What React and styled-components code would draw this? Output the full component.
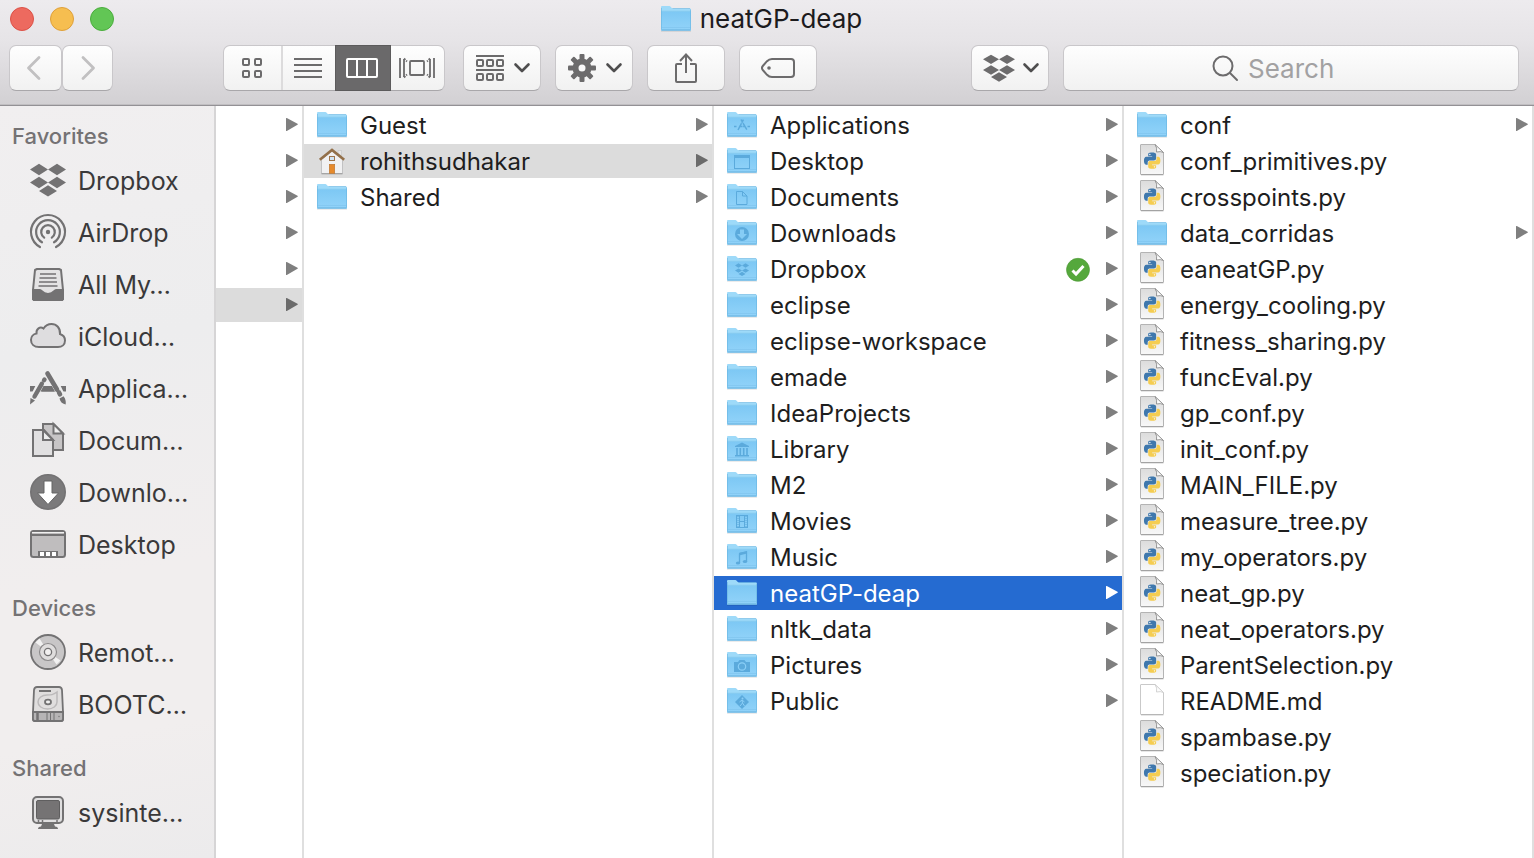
import React from "react";
import styled, { createGlobalStyle, css } from "styled-components";

const GlobalStyle = createGlobalStyle`
  * { box-sizing: border-box; }
  html, body, #root { height: 100%; margin: 0; }
  body { background: #fff; overflow: hidden; }
  body, button, input { font-family: Inter, "Liberation Sans", sans-serif; }
  button { border: 0; padding: 0; background: none; color: inherit; text-align: left; }
  svg { display: block; flex: none; overflow: visible; }
  ul { list-style: none; margin: 0; padding: 0; }
`;

const Window = styled.div`
  display: flex;
  flex-direction: column;
  height: 100vh;
`;

const Header = styled.header`
  flex: none;
  background: linear-gradient(#edebee, #e6e4e7 40%, #d2d0d3);
  border-bottom: 1px solid #939195;
  box-shadow: inset 0 -1px 0 #c0bec1;
  padding-bottom: 14px;
`;

const TitleBar = styled.div`
  display: grid;
  grid-template-columns: 1fr auto 1fr;
  align-items: center;
  height: 38px;
  margin-bottom: 7px;
  padding: 0 22px 0 10px;
`;

const Lights = styled.div`
  display: flex;
  gap: 16px;
`;

const Light = styled.button`
  width: 24px;
  height: 24px;
  border-radius: 50%;
  background: ${(p) => p.$fill};
  border: 1px solid ${(p) => p.$edge};
`;

const Title = styled.h1`
  display: flex;
  align-items: center;
  gap: 8px;
  margin: 0;
  font-size: 26px;
  line-height: 32px;
  font-weight: 400;
  color: #1c1b1d;
`;

const Toolbar = styled.div`
  display: flex;
  padding: 0 15px 0 9px;
`;

const raised = css`
  height: 46px;
  background: linear-gradient(#fefefe, #f1f1f1);
  border: 1px solid #c9c7ca;
  border-bottom-color: #a9a7aa;
  border-radius: 7px;
`;

const ToolButton = styled.button`
  ${raised}
  display: flex;
  align-items: center;
  justify-content: center;
  gap: 10px;
  flex: none;
  width: ${(p) => p.$width || 78}px;
  color: ${(p) => (p.disabled ? "#c1c0c1" : "#6c6b6c")};
`;

const MenuButton = styled(ToolButton)`
  padding-left: 2px;
`;

const DropboxButton = styled(ToolButton)`
  gap: 8px;
  padding-left: 2px;
`;

const BackButton = styled(ToolButton)`
  padding-right: 4px;
`;

const Group = styled.div`
  display: flex;
  flex: none;
  gap: ${(p) => p.$gap}px;
  margin-right: ${(p) => p.$after}px;
`;

const Segments = styled(Group)`
  ${raised}
`;

const Segment = styled.button`
  display: flex;
  align-items: center;
  justify-content: center;
  width: ${(p) => p.$width}px;
  padding-right: 2px;
  color: #6c6b6c;
  border-left: ${(p) => (p.$divided ? "2px solid #dcdbdc" : "0")};
  ${(p) =>
    p.$active &&
    css`
      color: #fff;
      background: #6a696a;
      border: 1px solid #5c5b5c;
      margin: -1px 0;
    `}
`;

const SearchField = styled.label`
  ${raised}
  display: flex;
  flex: 1;
  align-items: center;
  justify-content: center;
  gap: 10px;
  padding-right: 30px;
`;

const SearchInput = styled.input`
  width: 92px;
  padding: 1px 0 0;
  border: 0;
  outline: 0;
  background: none;
  font-size: 26px;
  color: #333;
  &::placeholder { color: #a2a1a2; opacity: 1; }
`;

const Body = styled.main`
  display: flex;
  flex: 1;
  min-height: 0;
`;

const Sidebar = styled.nav`
  flex: none;
  width: 216px;
  padding-top: 13px;
  overflow: hidden;
  border-right: 2px solid #d6d5d6;
  background: linear-gradient(170deg, #f1eff0, #ededee 32%, #f1eeee 62%, #f1eeee 82%, #ecebec);
`;

const Section = styled.section`
  margin-bottom: 20px;
`;

const SectionTitle = styled.h2`
  margin: 0;
  padding-left: 12px;
  font-size: 22px;
  line-height: 35px;
  height: 36px;
  font-weight: 500;
  color: #747274;
`;

const Place = styled.button`
  display: flex;
  align-items: center;
  gap: 12px;
  width: 100%;
  height: 52px;
  padding-left: 30px;
  font-size: 25px;
  color: #3a393a;
  white-space: nowrap;
`;

const Column = styled.ul`
  display: flex;
  flex-direction: column;
  gap: 2px;
  flex: ${(p) => (p.$narrow ? "0 0 88px" : "1 1 0")};
  min-width: 0;
  padding-top: 2px;
  overflow: hidden;
  border-right: 2px solid #dfdfdf;
`;

const Entry = styled.button`
  display: flex;
  align-items: center;
  width: 100%;
  height: 34px;
  padding: 0 4px 0 12px;
  gap: 12px;
  font-size: 24px;
  color: ${(p) => (p.$tone === "focus" ? "#fff" : "#1e1e1e")};
  background: ${(p) => ({ focus: "#256bd1", path: "#dcdcdc" })[p.$tone] || "none"};
`;

const EntryName = styled.span`
  flex: 1;
  min-width: 0;
  padding-top: 1px;
  white-space: nowrap;
`;

const Status = styled.span`
  margin-right: 4px;
`;

/* ---------- toolbar drawings ---------- */

const Chevron = () => (
  <svg width="16" height="10" viewBox="0 0 16 10" fill="none" stroke="#4f4e4f" strokeWidth="2.6" strokeLinecap="round" strokeLinejoin="round">
    <path d="M1.5 1.5 8 8l6.500-6.500" />
  </svg>
);

const Arrow = ({ back }) => (
  <svg width="14" height="24" viewBox="0 0 14 24" fill="none" stroke="currentColor" strokeWidth="2.800" strokeLinecap="round" strokeLinejoin="round">
    <path d={back ? "M12 1.500 1.500 12 12 22.500" : "M2 1.500 12.500 12 2 22.500"} />
  </svg>
);

const GridIcon = () => (
  <svg width="20" height="20" viewBox="0 0 20 20" fill="none" stroke="currentColor" strokeWidth="2">
    {[[1, 1], [13, 1], [1, 13], [13, 13]].map(([x, y]) => (
      <rect key={`${x}-${y}`} x={x} y={y} width="6" height="6" rx="1" />
    ))}
  </svg>
);

const ListIcon = () => (
  <svg width="28" height="20" viewBox="0 0 28 20" stroke="currentColor" strokeWidth="2">
    <path d="M0 1h28M0 7h28M0 13h28M0 19h28" />
  </svg>
);

const ColumnsIcon = () => (
  <svg width="32" height="20" viewBox="0 0 32 20" fill="none" stroke="currentColor" strokeWidth="2">
    <rect x="1" y="1" width="30" height="18" rx="1" />
    <path d="M11 1v18M21 1v18" />
  </svg>
);

const CoverIcon = () => (
  <svg width="36" height="20" viewBox="0 0 36 20" fill="none" stroke="currentColor" strokeWidth="1.800">
    <rect x="11" y="3" width="14" height="14" rx="1" />
    <path d="M1 0v20M35 0v20M5 1v18M31 1v18" />
    <path d="M5 .5 8 3.500M5 19.500 8 16.500M31 .5 28 3.500M31 19.500 28 16.500" strokeDasharray="2 1" />
  </svg>
);

const ArrangeIcon = () => (
  <svg width="28" height="26" viewBox="0 0 28 26" fill="none" stroke="currentColor" strokeWidth="2">
    <path d="M0 1h28M0 15h28" />
    {[5, 19].map((y) => [1, 11, 21].map((x) => <rect key={`${x}-${y}`} x={x} y={y} width="6" height="6" rx="1" />))}
  </svg>
);

const GearIcon = () => (
  <svg width="28" height="28" viewBox="0 0 28 28" fill="currentColor">
    {[0, 45, 90, 135].map((a) => (
      <rect key={a} x="11.500" y="0" width="5" height="28" rx="1" transform={`rotate(${a} 14 14)`} />
    ))}
    <circle cx="14" cy="14" r="9.500" />
    <circle cx="14" cy="14" r="3.500" fill="#f8f8f8" />
  </svg>
);

const ShareIcon = () => (
  <svg width="22" height="30" viewBox="0 0 22 30" fill="none" stroke="currentColor" strokeWidth="2">
    <path d="M7 11H2a1 1 0 0 0-1 1v16a1 1 0 0 0 1 1h18a1 1 0 0 0 1-1V12a1 1 0 0 0-1-1h-5M11 20V2M5 8l6-6.500L17 8" />
  </svg>
);

const TagIcon = () => (
  <svg width="34" height="20" viewBox="0 0 34 20" fill="none" stroke="currentColor" strokeWidth="2">
    <path d="M11 1h19a3 3 0 0 1 3 3v12a3 3 0 0 1-3 3H11c-2 0-3.500-.6-5-2.200L1.800 12c-1-1.200-1-2.800 0-4L6 3.200C7.500 1.600 9 1 11 1Z" />
    <circle cx="8" cy="10" r="1.800" fill="currentColor" stroke="none" />
  </svg>
);

const SearchIcon = () => (
  <svg width="26" height="26" viewBox="0 0 26 26" fill="none" stroke="#6c6b6c" strokeWidth="2" strokeLinecap="round">
    <circle cx="11" cy="11" r="9.500" />
    <path d="m18 18 7 7" />
  </svg>
);

const dropboxPath =
  "M9 .8 18 6.500 9 12.200 0 6.500ZM27 .8l9 5.700-9 5.700-9-5.700ZM9 13.800l9 5.700-9 5.700-9-5.700ZM27 13.800l9 5.700-9 5.700-9-5.700ZM18 22.200l9 5.700-9 5.700-9-5.700Z";

const DropboxMark = () => (
  <svg width="32" height="28" viewBox="0 0 36 34" preserveAspectRatio="none" fill="currentColor">
    <path d={dropboxPath} />
  </svg>
);

/* ---------- sidebar drawings, on a 36px square ---------- */

const G = "#737273";
const placeArt = {
  dropbox: <path d={dropboxPath} fill={G} />,
  airdrop: (
    <g fill="none" stroke={G} strokeWidth="2.200" strokeLinecap="round">
      <path d="M10 32a17 17 0 1 1 16 0" />
      <path d="M12 27.300a11.900 11.900 0 1 1 12 0" />
      <path d="M14.200 22.600a6.800 6.800 0 1 1 7.600 0" />
      <circle cx="18" cy="17" r="2.200" fill={G} stroke="none" />
    </g>
  ),
  files: (
    <g stroke={G} strokeWidth="2">
      <path d="M7 2h22l2 1 2 20v9l-1 1H4l-1-1v-9L5 3Z" fill="#e4e3e4" strokeLinejoin="round" />
      <path d="M3 23h7c2 0 2 4 8 4s6-4 8-4h7v9l-1 1H4l-1-1Z" fill={G} />
      <path d="M10 7h16M9.500 11h17M9 15h18M8.500 19h19" strokeWidth="1.700" />
    </g>
  ),
  cloud: (
    <path d="M9 28C4 28 1 25 1 21c0-3 2-6 5.500-6.500C6 10 10 7 13.500 9.500 15.500 6.500 18 5 21.500 5c5 0 9 4 8.500 10 3 1 5 3 5 6.500 0 4-3 6.500-7 6.500Z" fill="#dedddf" stroke={G} strokeWidth="2" />
  ),
  apps: (
    <g>
      <path d="M0 15h36v5.500H0Z" fill={G} />
      <path d="M16 2 3 29M20 2l13 27" stroke="#eee" strokeWidth="8" />
      <path d="M13.500 15h8l3.500 5.500H10.500Z" fill={G} />
      <g stroke={G} strokeLinecap="round" fill="none">
        <path d="m17.500 2.500 9.500 16M29 21.500l1 1.800" strokeWidth="4.600" />
        <path d="M14.500 8.500 14 9.200M11.800 12.800 4.500 25.500" strokeWidth="4.400" />
      </g>
      <path d="M.5 27 5 29.500 0 33.500Z" fill={G} />
      <path d="m29.500 27.500 4-2.200c2 2.200 2.500 5 2.200 8.200-3-.5-5.500-2.500-6.200-6Z" fill={G} />
    </g>
  ),
  docs: (
    <g stroke={G} strokeWidth="2">
      <path d="M13 1h10.500L33 10.500V27H13Z" fill="#c7c5c6" />
      <path d="M23.500 1v9.500H33Z" fill="#eee" />
      <path d="M3 7h11l9 10v16H3Z" fill="#e1e0e1" />
      <path d="M13 7v10h10Z" fill="#eee" />
    </g>
  ),
  down: (
    <g>
      <circle cx="18" cy="17" r="17.200" fill="#7b7a7b" stroke={G} strokeWidth="1.600" />
      <path d="M14 6h8v12h6.500L18 29.500 7.500 18H14Z" fill="#fff" stroke="#656465" />
    </g>
  ),
  desktop: (
    <g>
      <rect x="1" y="4" width="34" height="26" rx="2.500" fill="#bfbdbe" stroke={G} strokeWidth="2" />
      <path d="M2 5.500h32" stroke="#f0f0f0" />
      <path d="M1 8h34" stroke={G} strokeWidth="2" />
      <path d="M8 24h20v5H8Z" fill={G} />
      <path d="M10 25h4v4h-4ZM16 25h4v4h-4ZM22 25h4v4h-4Z" fill="#fff" />
    </g>
  ),
  disc: (
    <g stroke={G}>
      <circle cx="18" cy="17" r="17" fill="#c8c6c7" strokeWidth="1.800" />
      <path d="M18 17 5.500 7.500 9.500 3.500ZM18 17l8.500 12.500 4-4Z" fill="#f2f1f1" stroke="none" />
      <circle cx="18" cy="17" r="8.500" fill="#dfdddd" stroke="#8c8a8b" strokeWidth="1.200" />
      <circle cx="18" cy="17" r="3.600" fill="#f2f0f0" strokeWidth="1.300" />
    </g>
  ),
  drive: (
    <g stroke={G} strokeWidth="1.800">
      <path d="M7 0h22q2.500 0 3 3l1 22v7q0 2-2 2H5q-2 0-2-2v-7L4 3Q4.500 0 7 0Z" fill="#e0dede" />
      <path d="M3 25h30v7q0 2-2 2H5q-2 0-2-2Z" fill="#b6b4b5" />
      <path d="M9 4h12" strokeWidth="2" />
      <path d="M27 5v10c0 4-4 7-9.500 7S8 19 8 15s4-7 9-7c4 0 6 0 10-3Z" fill="none" stroke="#bbb9ba" strokeWidth="1.500" />
      <ellipse cx="18" cy="15" rx="3" ry="2.300" fill="#eee" />
      <path d="M7.500 26v7" strokeWidth="2.500" />
      <path d="M17 26v7M20.500 26v7M24 26v7" strokeWidth="1" />
      <circle cx="29" cy="29.500" r=".7" fill={G} stroke="none" />
    </g>
  ),
  monitor: (
    <g>
      <rect x="3" y="2" width="30" height="26" rx="4" fill="#e0dfe0" stroke={G} strokeWidth="2" />
      <rect x="6.500" y="5.500" width="23" height="18.500" rx="1.500" fill="#757374" stroke="#5f5e5f" />
      <path d="M8.500 25v2M12.500 25v2M27 25v2" stroke={G} strokeWidth="1.500" />
      <path d="M12 29h12l1 2.500c2 .3 3 1 3 2.500H8c0-1.500 1-2.200 3-2.500Z" fill={G} />
    </g>
  ),
};

const PlaceIcon = ({ name }) => (
  <svg width="36" height="36" viewBox="0 0 36 36" aria-hidden="true">{placeArt[name]}</svg>
);

/* ---------- file drawings, on a 32px square ---------- */

const Gradients = () => (
  <svg width="0" height="0" style={{ position: "absolute" }} aria-hidden="true">
    <defs>
      <linearGradient id="folderFront" x1="0" y1="0" x2="0" y2="1">
        <stop offset="0" stopColor="#7dc8f4" />
        <stop offset="1" stopColor="#92d3f9" />
      </linearGradient>
      <linearGradient id="paper" x1="0" y1="0" x2="0" y2="1">
        <stop offset="0" stopColor="#dcdcdc" />
        <stop offset="1" stopColor="#f8f8f8" />
      </linearGradient>
    </defs>
  </svg>
);

const B = "#5baadc";
const folderArt = {
  apps: (
    <path d="m12 21 5.500-10.500M15 10.500 21 21M8 17.500h2.500M13 17.500h6.500M21.500 17.500H24" stroke={B} strokeWidth="1.500" strokeDasharray="3.500 .6" />
  ),
  desktop: (
    <g stroke={B} fill="none">
      <rect x="8.500" y="10.500" width="15" height="13" />
      <path d="M9 12h14" strokeWidth="2" />
    </g>
  ),
  docs: <path d="M10.500 10.500h6l4.500 4.500v8.500H10.500ZM16.500 10.500V15H21" stroke={B} fill="none" />,
  down: (
    <g>
      <circle cx="16" cy="17" r="7" fill={B} />
      <path d="M14 12.500h4V17h3l-5 5-5-5h3Z" fill="#86ccf5" />
    </g>
  ),
  dropbox: <path d={dropboxPath} fill={B} transform="translate(9 10) scale(.39)" />,
  library: (
    <g fill={B}>
      <path d="m16 9.500 7 3.500v1H9v-1ZM9 22h14v1.500H9Z" />
      <path d="M11 15v7M14.300 15v7M17.700 15v7M21 15v7" stroke={B} strokeWidth="1.600" />
    </g>
  ),
  movies: (
    <g fill="none" stroke={B}>
      <rect x="10.500" y="10.500" width="11" height="12" />
      <path d="M13.500 10v13M18.500 10v13M13 16.500h6" />
      <path d="M12 11v12M20 11v12" strokeDasharray="1 1" />
    </g>
  ),
  music: (
    <g fill={B}>
      <path d="M13.500 12.500 20.500 11v9.500M13.500 12.500V22" fill="none" stroke={B} strokeWidth="1.300" />
      <path d="M13 12l8-2v2.500l-8 2Z" />
      <ellipse cx="12" cy="22" rx="2.200" ry="1.600" />
      <ellipse cx="19" cy="20.500" rx="2.200" ry="1.600" />
    </g>
  ),
  pictures: (
    <g>
      <path d="M8 13h4l1.500-2h5l1.500 2h4v10H8Z" fill={B} />
      <circle cx="16" cy="17.500" r="3.700" fill="none" stroke="#8bcff7" strokeWidth="1.200" />
    </g>
  ),
  public: (
    <g>
      <path d="m16 10 7 7-7 7-7-7Z" fill={B} />
      <circle cx="16.500" cy="13.500" r="1" fill="#8bcff7" />
      <path d="m16 15 .5 3-2.500 3M16.500 18l2 3M13.500 17l2.500-2 2.500 2" fill="none" stroke="#8bcff7" />
    </g>
  ),
};

const Folder = ({ glyph }) => (
  <svg width="32" height="32" viewBox="0 0 32 32" aria-hidden="true">
    <path d="M1 27.500h30v1H1Z" fill="#000" opacity=".16" />
    <path d="M1 27.500V4q0-1 1-1h7.500c1.500 0 1.500 2.500 3.500 2.500h17q1 0 1 1v21Z" fill="#9edaf9" />
    <path d="M1 8.500h30v18q0 1-1 1H2q-1 0-1-1Z" fill="url(#folderFront)" />
    <path d="M1.500 5v21.500M30.500 6.500v20M12.500 5.500H30" stroke="#68b5e1" strokeWidth=".6" />
    <path d="M1.500 8.200h29M1.500 24.500h29" stroke="#68b5e1" strokeWidth=".3" />
    <path d="M1.500 27h29" stroke="#62aedb" />
    {folderArt[glyph]}
  </svg>
);

const House = () => (
  <svg width="32" height="32" viewBox="0 0 32 32" aria-hidden="true">
    <path d="M22 5.500h3.500V11l-3.500-3Z" fill="#e6e6e6" stroke="#c4c4c4" strokeWidth=".6" />
    <path d="M16 6 5.500 14.500v14h21v-14Z" fill="#f1f1f2" stroke="#b9b9ba" strokeWidth=".8" />
    <path d="M5.500 28.800h21" stroke="#999" />
    <path d="M3.800 14.800 16 5l12.200 9.800" fill="none" stroke="#93704a" strokeWidth="2.600" />
    <rect x="13.500" y="11.500" width="5" height="4" fill="#cfe3f3" stroke="#a0764c" />
    <rect x="13.300" y="19.300" width="5.400" height="9" fill="#e68a2c" stroke="#b9742f" strokeWidth=".6" />
  </svg>
);

const pySnake =
  "M14.25.18l.9.2.73.26.59.3.45.32.34.34.25.34.16.33.1.3.04.26.02.2-.01.13V8.5l-.05.63-.13.55-.21.46-.26.38-.3.31-.33.25-.35.19-.35.14-.33.1-.3.07-.26.04-.21.02H8.77l-.69.05-.59.14-.5.22-.41.27-.33.32-.27.35-.2.36-.15.37-.1.35-.07.32-.04.27-.02.21v3.06H3.17l-.21-.03-.28-.07-.32-.12-.35-.18-.36-.26-.36-.36-.35-.46-.32-.59-.28-.73-.21-.88-.14-1.05-.05-1.23.06-1.22.16-1.04.24-.87.32-.71.36-.57.4-.44.42-.33.42-.24.4-.16.36-.1.32-.05.24-.01h.16l.06.01h8.16v-.83H6.18l-.01-2.75-.02-.37.05-.34.11-.31.17-.28.25-.26.31-.23.38-.2.44-.18.51-.15.58-.12.64-.1.71-.06.77-.04.84-.02 1.27.05z";

const Paper = ({ python }) => (
  <svg width="32" height="32" viewBox="0 0 32 32" aria-hidden="true">
    <path d="M5 -.5h14l8.500 8V29q0 .5-.5.5H5q-.5 0-.5-.5V0q0-.5.5-.5Z" fill={python ? "url(#paper)" : "#fff"} stroke={python ? "#b4b4b4" : "#c9c9c9"} strokeWidth="1" />
    <path d="M5 30h22.500" stroke="#000" opacity=".18" />
    <path d="M19 -.5q2.500 3.500 1.500 7.500 4-1 7 .5Z" fill="#fcfcfc" stroke={python ? "#8f8f8f" : "#cfcfcf"} strokeWidth=".9" />
    {python && (
      <g transform="translate(8 7.500) scale(.68)">
        <path d={pySnake} fill="#3f78ad" />
        <path d={pySnake} fill="#f5cd51" transform="rotate(180 12 12)" />
        <circle cx="8.600" cy="2.900" r="1" fill="#fff" />
        <circle cx="15.400" cy="21.100" r="1" fill="#fff" />
      </g>
    )}
  </svg>
);

const Disclosure = ({ tone }) => (
  <svg width="12" height="14" viewBox="0 0 12 14" aria-hidden="true">
    <path d="M.8 0 11.500 5.700q.9.500 0 1L.8 13Q0 13.400 0 12.500V.5Q0-.4.8 0Z" fill={{ focus: "#fff", path: "#6b6b6b" }[tone] || "#7f7f7f"} />
  </svg>
);

const Synced = () => (
  <svg width="24" height="24" viewBox="0 0 24 24" role="img" aria-label="Synced">
    <circle cx="12" cy="12.800" r="11.500" fill="#55a83c" stroke="#4a9733" strokeWidth=".6" />
    <path d="m6.500 13.500 3.500 3.500 7.500-8" fill="none" stroke="#fff" strokeWidth="3" />
  </svg>
);

/* ---------- data ---------- */

const places = [
  ["Favorites", [
    ["dropbox", "Dropbox"], ["airdrop", "AirDrop"], ["files", "All My…"], ["cloud", "iCloud…"],
    ["apps", "Applica…"], ["docs", "Docum…"], ["down", "Downlo…"], ["desktop", "Desktop"],
  ]],
  ["Devices", [["disc", "Remot…"], ["drive", "BOOTC…"]]],
  ["Shared", [["monitor", "sysinte…"]]],
];

const dir = (name, glyph, extra) => ({ name, glyph, kind: "folder", ...extra });

const users = [dir("Guest"), dir("rohithsudhakar", null, { kind: "home", tone: "path" }), dir("Shared")];

const home = [
  dir("Applications", "apps"), dir("Desktop", "desktop"), dir("Documents", "docs"), dir("Downloads", "down"),
  dir("Dropbox", "dropbox", { synced: true }), dir("eclipse"), dir("eclipse-workspace"), dir("emade"),
  dir("IdeaProjects"), dir("Library", "library"), dir("M2"), dir("Movies", "movies"), dir("Music", "music"),
  dir("neatGP-deap", null, { tone: "focus" }), dir("nltk_data"), dir("Pictures", "pictures"), dir("Public", "public"),
];

const project = [
  "conf/", "conf_primitives.py", "crosspoints.py", "data_corridas/", "eaneatGP.py", "energy_cooling.py",
  "fitness_sharing.py", "funcEval.py", "gp_conf.py", "init_conf.py", "MAIN_FILE.py", "measure_tree.py",
  "my_operators.py", "neat_gp.py", "neat_operators.py", "ParentSelection.py", "README.md", "spambase.py",
  "speciation.py",
].map((n) =>
  n.endsWith("/") ? dir(n.slice(0, -1)) : { name: n, kind: n.endsWith(".py") ? "python" : "text" }
);

const FileIcon = ({ kind, glyph }) => {
  if (kind === "home") return <House />;
  if (kind === "folder") return <Folder glyph={glyph} />;
  return <Paper python={kind === "python"} />;
};

const FileColumn = ({ items }) => (
  <Column>
    {items.map((f) => (
      <li key={f.name}>
        <Entry $tone={f.tone}>
          <FileIcon kind={f.kind} glyph={f.glyph} />
          <EntryName>{f.name}</EntryName>
          {f.synced && <Status><Synced /></Status>}
          {(f.kind === "folder" || f.kind === "home") && <Disclosure tone={f.tone} />}
        </Entry>
      </li>
    ))}
  </Column>
);

export default function App() {
  return (
    <Window>
      <GlobalStyle />
      <Gradients />
      <Header>
        <TitleBar>
          <Lights>
            <Light aria-label="Close" $fill="#ed6a5f" $edge="#dc5147" />
            <Light aria-label="Minimize" $fill="#f6be50" $edge="#dfa03a" />
            <Light aria-label="Zoom" $fill="#62c655" $edge="#4aad3d" />
          </Lights>
          <Title><Folder />neatGP-deap</Title>
        </TitleBar>
        <Toolbar>
          <Group $gap={0} $after={110}>
            <BackButton $width={53} disabled aria-label="Back"><Arrow back /></BackButton>
            <ToolButton $width={51} disabled aria-label="Forward"><Arrow /></ToolButton>
          </Group>
          <Segments $gap={0} $after={18}>
            <Segment $width={57} aria-label="Icons"><GridIcon /></Segment>
            <Segment $width={54} $divided aria-label="List"><ListIcon /></Segment>
            <Segment $width={56} $active aria-label="Columns"><ColumnsIcon /></Segment>
            <Segment $width={53} aria-label="Cover Flow"><CoverIcon /></Segment>
          </Segments>
          <Group $gap={14} $after={154}>
            <MenuButton aria-label="Arrange"><ArrangeIcon /><Chevron /></MenuButton>
            <MenuButton aria-label="Actions"><GearIcon /><Chevron /></MenuButton>
            <ToolButton aria-label="Share"><ShareIcon /></ToolButton>
            <ToolButton aria-label="Tags"><TagIcon /></ToolButton>
          </Group>
          <Group $gap={0} $after={14}>
            <DropboxButton aria-label="Dropbox"><DropboxMark /><Chevron /></DropboxButton>
          </Group>
          <SearchField>
            <SearchIcon />
            <SearchInput type="text" placeholder="Search" aria-label="Search" />
          </SearchField>
        </Toolbar>
      </Header>
      <Body>
        <Sidebar>
          {places.map(([title, rows]) => (
            <Section key={title}>
              <SectionTitle>{title}</SectionTitle>
              {rows.map(([icon, label]) => (
                <Place key={label}><PlaceIcon name={icon} />{label}</Place>
              ))}
            </Section>
          ))}
        </Sidebar>
        <Column $narrow>
          {[0, 1, 2, 3, 4, 5].map((i) => (
            <li key={i}>
              <Entry $tone={i === 5 ? "path" : undefined} aria-label={`Folder ${i + 1}`}>
                <EntryName />
                <Disclosure tone={i === 5 ? "path" : undefined} />
              </Entry>
            </li>
          ))}
        </Column>
        <FileColumn items={users} />
        <FileColumn items={home} />
        <FileColumn items={project} />
      </Body>
    </Window>
  );
}
